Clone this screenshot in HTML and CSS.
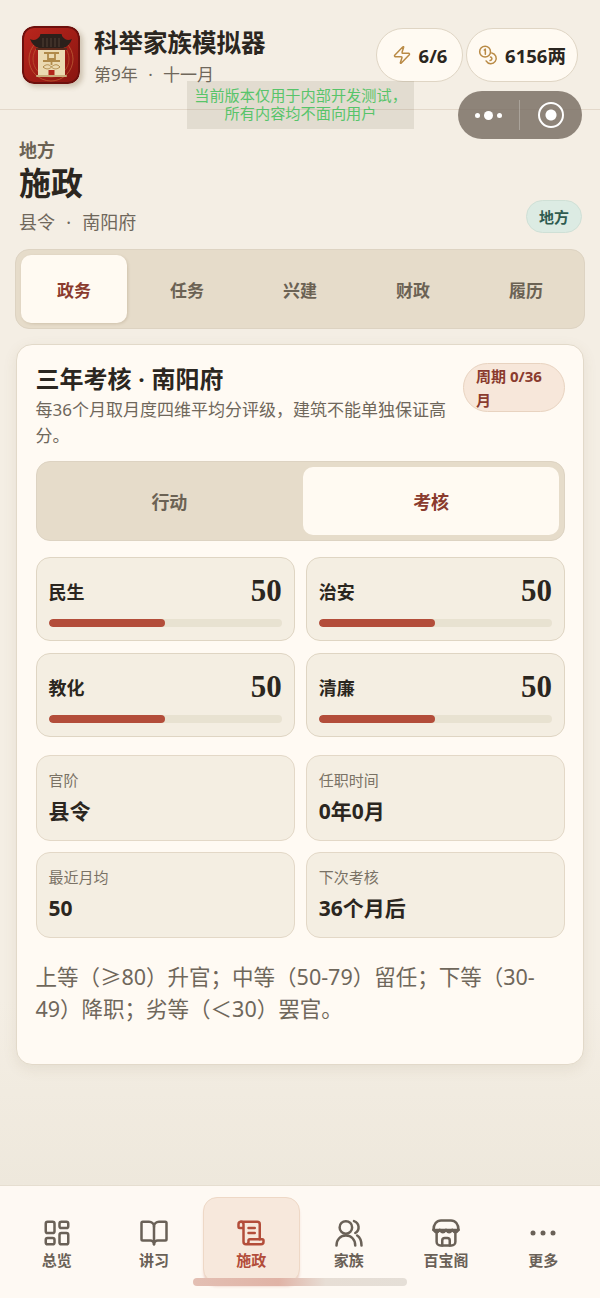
FILE: index.html
```html
<!DOCTYPE html>
<html lang="zh-CN">
<head>
    <meta charset="UTF-8">
    <meta name="viewport" content="width=device-width, initial-scale=1.0">
    <title>科举家族模拟器</title>
    <link rel="stylesheet" href="styles.css">
</head>
<body>

<div class="page">
    <header class="topbar">
        <div class="brand">
            <svg class="logo" viewBox="0 0 58 58" aria-hidden="true">
                <defs>
                    <linearGradient id="logoBg" x1="0" y1="0" x2="1" y2="1">
                        <stop offset="0" stop-color="#b9261d"/>
                        <stop offset="1" stop-color="#8a1510"/>
                    </linearGradient>
                </defs>
                <rect width="58" height="58" rx="12" fill="#6d100d"/>
                <rect x="2" y="2" width="54" height="54" rx="10" fill="url(#logoBg)"/>
                <circle cx="29" cy="33" r="22" fill="none" stroke="#c9733f" stroke-width="0.6"/>
                <circle cx="29" cy="33" r="18" fill="none" stroke="#c9733f" stroke-width="0.5"/>
                <path d="M8 13 C12 15 15 14 18 10 L40 10 C43 14 46 15 50 13 C48 18 45 21 41 22 L17 22 C13 21 10 18 8 13Z" fill="#2c201b"/>
                <rect x="18" y="8" width="22" height="3" rx="1" fill="#2c201b"/>
                <path d="M21 12v9M25 12v9M29 12v9M33 12v9M37 12v9" stroke="#5a4a3e" stroke-width="0.8"/>
                <rect x="16" y="22" width="27" height="28" fill="#ebdab2"/>
                <rect x="14" y="22" width="31" height="2" fill="#5b2a1c"/>
                <rect x="14" y="49" width="31" height="2" rx="1" fill="#c9ad7c"/>
                <path d="M22 27h15M26 27v6h7v-6M21 35h17M29.500 33v6" fill="none" stroke="#b08a4a" stroke-width="1.800"/>
                <path d="M21 41c3-3 6-3 8.500 0 3-3 6-3 8.500 0-3 2.500-6 2.500-8.500 0-2.500 2.500-5.500 2.500-8.500 0Z" fill="none" stroke="#b08a4a" stroke-width="1"/>
                <rect x="26.500" y="44" width="6" height="5" fill="#b3261c"/>
            </svg>
            <div>
                <div class="brand-name">科举家族模拟器</div>
                <div class="brand-date">第9年 · 十一月</div>
            </div>
        </div>
        <div class="stats">
            <div class="stat-pill stat-energy">
                <svg class="pill-icon" viewBox="0 0 24 24" aria-hidden="true">
                    <path d="M4 14a1 1 0 0 1-.78-1.63l9.9-10.2a.5.5 0 0 1 .86.46l-1.92 6.02A1 1 0 0 0 13 10h7a1 1 0 0 1 .78 1.63l-9.9 10.2a.5.5 0 0 1-.86-.46l1.92-6.02A1 1 0 0 0 11 14z"/>
                </svg>
                <span>6/6</span>
            </div>
            <div class="stat-pill stat-money">
                <svg class="pill-icon" viewBox="0 0 24 24" aria-hidden="true">
                    <circle cx="8.500" cy="8" r="6.500"/>
                    <path d="M7.500 6l1.300-1v6"/>
                    <path d="M16.500 9.500a6.500 6.500 0 1 1-6.800 9.600"/>
                    <path d="M15 14.500a2 2 0 0 1 1 3.500l-1.500 .5"/>
                </svg>
                <span>6156两</span>
            </div>
        </div>
    </header>

    <main class="content">
        <section class="heading">
            <div>
                <div class="eyebrow">地方</div>
                <h1>施政</h1>
                <div class="place">县令 · 南阳府</div>
            </div>
            <span class="region-badge">地方</span>
        </section>

        <nav class="tabs">
            <div class="tab active">政务</div>
            <div class="tab">任务</div>
            <div class="tab">兴建</div>
            <div class="tab">财政</div>
            <div class="tab">履历</div>
        </nav>

        <section class="card">
            <div class="card-head">
                <div class="card-intro">
                    <h2>三年考核 · 南阳府</h2>
                    <p>每36个月取月度四维平均分评级，建筑不能单独保证高分。</p>
                </div>
                <span class="cycle-badge">周期 0/36月</span>
            </div>

            <div class="segment">
                <div class="segment-item">行动</div>
                <div class="segment-item active">考核</div>
            </div>

            <div class="metric-grid">
                <div class="metric">
                    <div class="metric-row"><span class="metric-name">民生</span><span class="metric-value">50</span></div>
                    <div class="bar"><div class="bar-fill" style="width: 50%"></div></div>
                </div>
                <div class="metric">
                    <div class="metric-row"><span class="metric-name">治安</span><span class="metric-value">50</span></div>
                    <div class="bar"><div class="bar-fill" style="width: 50%"></div></div>
                </div>
                <div class="metric">
                    <div class="metric-row"><span class="metric-name">教化</span><span class="metric-value">50</span></div>
                    <div class="bar"><div class="bar-fill" style="width: 50%"></div></div>
                </div>
                <div class="metric">
                    <div class="metric-row"><span class="metric-name">清廉</span><span class="metric-value">50</span></div>
                    <div class="bar"><div class="bar-fill" style="width: 50%"></div></div>
                </div>
            </div>

            <div class="info-grid">
                <div class="info">
                    <div class="info-label">官阶</div>
                    <div class="info-value">县令</div>
                </div>
                <div class="info">
                    <div class="info-label">任职时间</div>
                    <div class="info-value">0年0月</div>
                </div>
                <div class="info">
                    <div class="info-label">最近月均</div>
                    <div class="info-value">50</div>
                </div>
                <div class="info">
                    <div class="info-label">下次考核</div>
                    <div class="info-value">36个月后</div>
                </div>
            </div>

            <p class="rules">上等（≥80）升官；中等（50-79）留任；下等（30-49）降职；劣等（＜30）罢官。</p>
        </section>
    </main>

    <nav class="bottom-nav">
        <div class="nav-item">
            <svg class="nav-icon" viewBox="0 0 24 24" aria-hidden="true">
                <rect x="3" y="3" width="7" height="9" rx="1.500"/>
                <rect x="14" y="3" width="7" height="5" rx="1.500"/>
                <rect x="14" y="12" width="7" height="9" rx="1.500"/>
                <rect x="3" y="16" width="7" height="5" rx="1.500"/>
            </svg>
            <span>总览</span>
        </div>
        <div class="nav-item">
            <svg class="nav-icon" viewBox="0 0 24 24" aria-hidden="true">
                <path d="M12 7v14"/>
                <path d="M3 18a1 1 0 0 1-1-1V4a1 1 0 0 1 1-1h5a4 4 0 0 1 4 4 4 4 0 0 1 4-4h5a1 1 0 0 1 1 1v13a1 1 0 0 1-1 1h-6a3 3 0 0 0-3 3 3 3 0 0 0-3-3z"/>
            </svg>
            <span>讲习</span>
        </div>
        <div class="nav-item active">
            <svg class="nav-icon" viewBox="0 0 24 24" aria-hidden="true">
                <path d="M15 12h-5"/>
                <path d="M15 8h-5"/>
                <path d="M19 17V5a2 2 0 0 0-2-2H4"/>
                <path d="M8 21h12a2 2 0 0 0 2-2v-1a1 1 0 0 0-1-1H11a1 1 0 0 0-1 1v1a2 2 0 1 1-4 0V5a2 2 0 1 0-4 0v2a1 1 0 0 0 1 1h3"/>
            </svg>
            <span>施政</span>
        </div>
        <div class="nav-item">
            <svg class="nav-icon" viewBox="0 0 24 24" aria-hidden="true">
                <circle cx="9.500" cy="7.500" r="5"/>
                <path d="M2 22c0-4.800 3.200-8 7.500-8s7.500 3.200 7.500 8"/>
                <path d="M16 2.500a5.200 5.200 0 0 1 1 9.500"/>
                <path d="M18.500 14c2.200 1.400 3.500 4 3.500 8"/>
            </svg>
            <span>家族</span>
        </div>
        <div class="nav-item">
            <svg class="nav-icon" viewBox="0 0 24 24" aria-hidden="true">
                <path d="M2 9.500C2 5 4.500 2 8 2h8c3.500 0 6 3 6 7.500z"/>
                <path d="M2 9.500c1.600 2.500 3.400 2.500 5 0 1.600 2.500 3.400 2.500 5 0 1.600 2.500 3.400 2.500 5 0 1.600 2.500 3.400 2.500 5 0"/>
                <path d="M4.500 12v7a3 3 0 0 0 3 3h9a3 3 0 0 0 3-3v-7"/>
                <path d="M9 22v-4a2 2 0 0 1 2-2h2a2 2 0 0 1 2 2v4"/>
            </svg>
            <span>百宝阁</span>
        </div>
        <div class="nav-item">
            <svg class="nav-icon" viewBox="0 0 24 24" aria-hidden="true">
                <circle class="dot" cx="4" cy="12" r="2"/>
                <circle class="dot" cx="12" cy="12" r="2"/>
                <circle class="dot" cx="20" cy="12" r="2"/>
            </svg>
            <span>更多</span>
        </div>
    </nav>

    <div class="dev-notice">当前版本仅用于内部开发测试，<br>所有内容均不面向用户</div>
    <div class="capsule">
        <div class="capsule-dots"><i></i><i class="big"></i><i></i></div>
        <div class="capsule-line"></div>
        <div class="capsule-target"></div>
    </div>
    <div class="home-bar"></div>
</div>

</body>
</html>
```

FILE: styles.css
```css
* {
    box-sizing: border-box;
}

body {
    margin: 0;
    font-family: "Noto Sans", "Noto Sans CJK SC", sans-serif;
    color: #2b2620;
    background-color: #f4eee4;
}

h1, h2, p {
    margin: 0;
}

.page {
    position: relative;
    width: 600px;
    height: 1298px;
    overflow: hidden;
    display: flex;
    flex-direction: column;
    background: linear-gradient(#f4eee4 0, #f4eee4 1000px, #eee8dc 1185px);
}

/* top bar */
.topbar {
    height: 110px;
    flex-shrink: 0;
    display: flex;
    justify-content: space-between;
    align-items: flex-start;
    padding: 26px 22px 0;
    border-bottom: 1.5px solid #e3d8ca;
}

.brand {
    display: flex;
    gap: 14px;
}

.logo {
    width: 58px;
    height: 58px;
    border-radius: 12px;
    box-shadow: 3px 3px 5px rgba(120, 95, 60, 0.3);
}

.brand-name {
    margin-top: 1px;
    font-family: "Liberation Serif", "Noto Sans CJK SC", serif;
    font-size: 24.500px;
    font-weight: 700;
    line-height: 33px;
}

.brand-date {
    font-size: 17px;
    line-height: 26px;
    margin-top: 2px;
    word-spacing: 6px;
    color: #6f675b;
}

.stats {
    display: flex;
    gap: 3px;
    margin-top: 2px;
}

.stat-pill {
    height: 54px;
    display: flex;
    align-items: center;
    justify-content: center;
    gap: 7px;
    border: 1.5px solid #dfd5c4;
    border-radius: 27px;
    background-color: #fffaf2;
    font-size: 18.500px;
    font-weight: 700;
}

.stat-energy {
    width: 87px;
}

.stat-money {
    width: 112px;
}

.pill-icon {
    width: 20px;
    height: 22px;
    fill: none;
    stroke: #b98a45;
    stroke-width: 1.800;
    stroke-linecap: round;
    stroke-linejoin: round;
}

/* main */
.content {
    flex: 1;
    padding: 0 15px;
}

.heading {
    display: flex;
    justify-content: space-between;
    align-items: flex-end;
    padding: 28px 3px 0 4px;
}

.eyebrow {
    font-size: 18px;
    font-weight: 700;
    line-height: 24px;
    color: #6b6254;
}

h1 {
    font-family: "Liberation Serif", "Noto Sans CJK SC", serif;
    font-size: 32px;
    font-weight: 700;
    line-height: 44px;
}

.place {
    font-size: 18px;
    line-height: 26px;
    margin-top: 3px;
    word-spacing: 6.500px;
    color: #6f675b;
}

.region-badge {
    height: 33px;
    margin-bottom: 2px;
    padding: 0 12px;
    display: flex;
    align-items: center;
    border: 1px solid #cfe0d6;
    border-radius: 17px;
    background-color: #dcebe3;
    font-size: 15px;
    font-weight: 700;
    color: #2f5b50;
}

.tabs {
    height: 80px;
    margin-top: 14px;
    padding: 5px;
    display: grid;
    grid-template-columns: repeat(5, 1fr);
    gap: 7px;
    border: 1px solid #ddd3c2;
    border-radius: 14px;
    background-color: #e6dcca;
}

.tab {
    display: flex;
    align-items: center;
    justify-content: center;
    border-radius: 10px;
    font-size: 17px;
    font-weight: 700;
    color: #6b6254;
}

.tab.active {
    background-color: #fffaf2;
    color: #8a3b2e;
    box-shadow: 1px 1px 3px rgba(120, 95, 60, 0.2);
}

.card {
    margin: 15px 1px 0;
    height: 721px;
    padding: 18px 18px 0 18.500px;
    border: 1.5px solid #e2d9c9;
    border-radius: 16px;
    background-color: #fffaf3;
    box-shadow: 0 4px 14px rgba(120, 95, 60, 0.1);
}

.card-head {
    display: flex;
    justify-content: space-between;
    align-items: flex-start;
    gap: 14px;
}

.card-intro {
    flex: 1;
}

h2 {
    font-family: "Liberation Serif", "Noto Sans CJK SC", serif;
    font-size: 24px;
    font-weight: 700;
    line-height: 34px;
}

.card-intro p {
    font-size: 17px;
    line-height: 26px;
    color: #6f675b;
}

.cycle-badge {
    flex: 0 0 102px;
    height: 49px;
    padding: 0 12px;
    border: 1px solid #e8d3c0;
    border-radius: 25px;
    background-color: #f7e7da;
    font-size: 15px;
    font-weight: 700;
    line-height: 24px;
    color: #8a3b2e;
}

.segment {
    height: 80px;
    margin-top: 12px;
    padding: 5px;
    display: grid;
    grid-template-columns: 1fr 1fr;
    gap: 6px;
    border: 1px solid #ddd3c2;
    border-radius: 14px;
    background-color: #e6dcca;
}

.segment-item {
    display: flex;
    align-items: center;
    justify-content: center;
    border-radius: 10px;
    font-size: 18px;
    font-weight: 700;
    color: #6b6254;
}

.segment-item.active {
    background-color: #fffaf2;
    color: #8a3b2e;
}

.metric-grid, .info-grid {
    display: grid;
    grid-template-columns: 1fr 1fr;
    gap: 12px 11px;
}

.metric-grid {
    margin-top: 16px;
}

.metric {
    height: 84px;
    padding: 14px 12px 0;
    border: 1.5px solid #dfd5c3;
    border-radius: 14px;
    background-color: #f4eee2;
}

.metric-row {
    display: flex;
    justify-content: space-between;
    align-items: center;
    height: 38px;
}

.metric-name {
    font-size: 18px;
    font-weight: 700;
}

.metric-value {
    font-family: "Liberation Serif", serif;
    font-size: 31px;
    font-weight: 700;
}

.bar {
    height: 8px;
    margin-top: 9px;
    border-radius: 4px;
    background-color: #e8e2d1;
    overflow: hidden;
}

.bar-fill {
    height: 100%;
    border-radius: 4px;
    background-color: #b34d3a;
}

.info-grid {
    margin-top: 18px;
    gap: 11px;
}

.info {
    height: 86px;
    padding: 13px 12px 0;
    border: 1.5px solid #e3d8c7;
    border-radius: 14px;
    background-color: #f4eee2;
}

.info-label {
    font-size: 15px;
    line-height: 22px;
    color: #7a7265;
}

.info-value {
    font-size: 21px;
    font-weight: 700;
    line-height: 40px;
}

.rules {
    margin-top: 23px;
    font-size: 21.500px;
    line-height: 32px;
    color: #6f675b;
}

/* bottom nav */
.bottom-nav {
    height: 113px;
    flex-shrink: 0;
    padding: 11px 8px 0;
    display: grid;
    grid-template-columns: repeat(6, 1fr);
    align-items: start;
    border-top: 1.5px solid #e6ded0;
    background-color: #fef9f3;
}

.nav-item {
    height: 86px;
    padding-top: 20px;
    display: flex;
    flex-direction: column;
    align-items: center;
    gap: 1px;
    border: 1px solid transparent;
    border-radius: 14px;
    font-size: 15px;
    font-weight: 700;
    line-height: 22px;
    color: #6a6157;
}

.nav-item.active {
    border-color: #eed8c6;
    background-color: #f7e8dc;
    color: #b34d3a;
    box-shadow: 0 4px 3px -1px rgba(179, 77, 58, 0.3);
}

.nav-icon {
    width: 30px;
    height: 30px;
    fill: none;
    stroke: currentColor;
    stroke-width: 2;
    stroke-linecap: round;
    stroke-linejoin: round;
}

.nav-icon .dot {
    fill: currentColor;
    stroke: none;
}

/* things the wechat shell draws on top of the page */
.dev-notice {
    position: absolute;
    left: 187px;
    top: 81px;
    width: 227px;
    height: 48px;
    padding-top: 5px;
    background-color: rgba(120, 110, 90, 0.14);
    font-size: 15.200px;
    line-height: 18px;
    text-align: center;
    color: #58c46a;
}

.capsule {
    position: absolute;
    left: 458px;
    top: 91px;
    width: 124px;
    height: 48px;
    display: flex;
    align-items: center;
    border-radius: 24px;
    background-color: rgba(120, 108, 98, 0.82);
}

.capsule-dots {
    width: 61px;
    display: flex;
    align-items: center;
    justify-content: center;
    gap: 4px;
}

.capsule-dots i {
    width: 5px;
    height: 5px;
    border-radius: 50%;
    background-color: #fff;
}

.capsule-dots i.big {
    width: 9px;
    height: 9px;
}

.capsule-line {
    width: 1px;
    height: 30px;
    background-color: rgba(255, 255, 255, 0.25);
}

.capsule-target {
    width: 26px;
    height: 26px;
    margin-left: 18px;
    border: 2.500px solid #fff;
    border-radius: 50%;
    background: radial-gradient(circle, #fff 0, #fff 5px, transparent 6px);
}

.home-bar {
    position: absolute;
    left: 193px;
    top: 1278px;
    width: 214px;
    height: 8px;
    border-radius: 4px;
    background: linear-gradient(90deg, #e3bfb3 0, #e0b3a6 40%, #e7ded5 62%, #e5dfd7 100%);
}
```
